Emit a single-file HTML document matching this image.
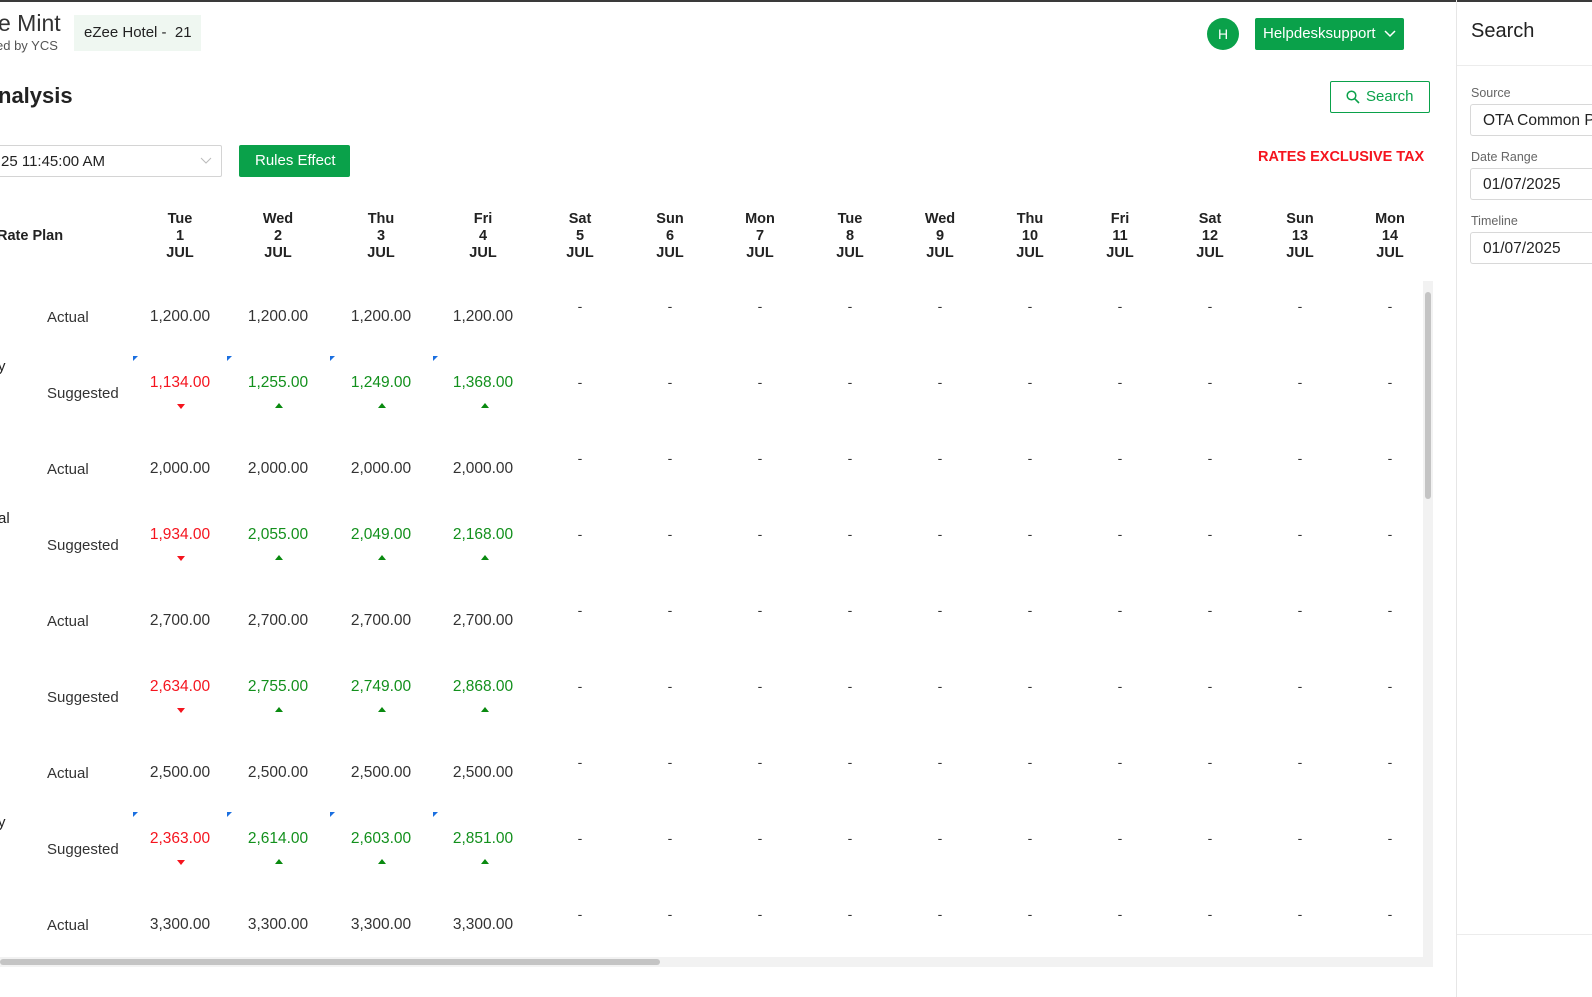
<!DOCTYPE html>
<html><head><meta charset="utf-8"><style>
*{margin:0;padding:0;box-sizing:border-box}
body{width:1592px;height:997px;overflow:hidden;background:#fff;font-family:"Liberation Sans",sans-serif;color:#222;position:relative}
.a{position:absolute;white-space:nowrap}
.c{position:absolute;width:110px;text-align:center;font-size:15.5px;line-height:18px;color:#333}
.h{position:absolute;width:80px;text-align:center;font-size:14.5px;font-weight:bold;line-height:17px;color:#222}
.r{color:#f5141e}.g{color:#12901c}
.up{position:absolute;width:0;height:0;border-left:4px solid transparent;border-right:4px solid transparent;border-bottom:5px solid #0a8a10}
.dn{position:absolute;width:0;height:0;border-left:4px solid transparent;border-right:4px solid transparent;border-top:5px solid #f5141e}
.bm{position:absolute;width:0;height:0;border-top:5px solid #1a6fe0;border-right:5px solid transparent}
.lbl{position:absolute;left:47px;font-size:15px;color:#333}
.inp{position:absolute;left:1470px;width:140px;height:32px;border:1px solid #d8d8d8;border-right:none;border-radius:3px 0 0 3px;font-size:15.5px;padding:7px 0 0 12px;color:#222}
.fl{position:absolute;left:1471px;font-size:12.5px;color:#666}
</style></head><body>
<div class="a" style="left:0;top:0;width:1592px;height:2px;background:#3a3a3a"></div>
<div class="a" style="left:-2px;top:10px;font-size:23px;color:#333">e Mint</div>
<div class="a" style="left:-4px;top:38px;font-size:13px;color:#555">ed by YCS</div>
<div class="a" style="left:74px;top:15px;width:127px;height:36px;background:#eff7f1;font-size:15px;padding:9px 0 0 10px;color:#222">eZee Hotel -&nbsp; 21</div>
<div class="a" style="left:1207px;top:18px;width:32px;height:32px;border-radius:50%;background:#0aa14a;color:#fff;font-size:14px;text-align:center;line-height:32px">H</div>
<div class="a" style="left:1255px;top:18px;width:149px;height:32px;background:#0aa14a;border-radius:2px;color:#fff;font-size:15px;padding:7px 0 0 8px">Helpdesksupport <svg width="12" height="8" style="margin-left:4px"><path d="M1 1l5 5 5-5" stroke="#fff" stroke-width="1.5" fill="none"/></svg></div>
<div class="a" style="left:-2px;top:83px;font-size:22px;font-weight:bold;color:#222">nalysis</div>
<div class="a" style="left:1330px;top:81px;width:100px;height:32px;border:1.5px solid #0aa14a;border-radius:2px;color:#0aa14a;font-size:15px;padding:6px 0 0 35px">Search</div>
<svg class="a" style="left:1346px;top:90px" width="14" height="14"><circle cx="5.5" cy="5.5" r="4.3" stroke="#0aa14a" stroke-width="1.5" fill="none"/><path d="M8.7 8.7L13 13" stroke="#0aa14a" stroke-width="1.6"/></svg>
<div class="a" style="left:-5px;top:145px;width:227px;height:32px;border:1px solid #d4d4d4;border-radius:2px;font-size:15px;padding:7px 0 0 5px;color:#222">25 11:45:00 AM</div>
<svg class="a" style="left:200px;top:157px" width="12" height="8"><path d="M1 1l5 5 5-5" stroke="#bbb" stroke-width="1" fill="none"/></svg>
<div class="a" style="left:239px;top:145px;width:111px;height:32px;background:#0aa14a;border-radius:2px;color:#fff;font-size:15px;padding:7px 0 0 16px">Rules Effect</div>
<div class="a" style="left:1258px;top:149px;font-size:14.5px;font-weight:bold;color:#f5141e">RATES EXCLUSIVE TAX</div>
<div class="a" style="left:-3px;top:228px;font-size:14.5px;font-weight:bold">Rate Plan</div>

<div class="h" style="left:140px;top:211px">Tue<br>1<br>JUL</div>
<div class="h" style="left:238px;top:211px">Wed<br>2<br>JUL</div>
<div class="h" style="left:341px;top:211px">Thu<br>3<br>JUL</div>
<div class="h" style="left:443px;top:211px">Fri<br>4<br>JUL</div>
<div class="h" style="left:540px;top:211px">Sat<br>5<br>JUL</div>
<div class="h" style="left:630px;top:211px">Sun<br>6<br>JUL</div>
<div class="h" style="left:720px;top:211px">Mon<br>7<br>JUL</div>
<div class="h" style="left:810px;top:211px">Tue<br>8<br>JUL</div>
<div class="h" style="left:900px;top:211px">Wed<br>9<br>JUL</div>
<div class="h" style="left:990px;top:211px">Thu<br>10<br>JUL</div>
<div class="h" style="left:1080px;top:211px">Fri<br>11<br>JUL</div>
<div class="h" style="left:1170px;top:211px">Sat<br>12<br>JUL</div>
<div class="h" style="left:1260px;top:211px">Sun<br>13<br>JUL</div>
<div class="h" style="left:1350px;top:211px">Mon<br>14<br>JUL</div>

<svg class="a" style="left:0;top:0" width="1420" height="960" font-family="Liberation Sans" font-size="14" fill="#333" text-anchor="middle">
<text x="580" y="311">-</text><text x="670" y="311">-</text><text x="760" y="311">-</text><text x="850" y="311">-</text><text x="940" y="311">-</text><text x="1030" y="311">-</text><text x="1120" y="311">-</text><text x="1210" y="311">-</text><text x="1300" y="311">-</text><text x="1390" y="311">-</text>
<text x="580" y="387">-</text><text x="670" y="387">-</text><text x="760" y="387">-</text><text x="850" y="387">-</text><text x="940" y="387">-</text><text x="1030" y="387">-</text><text x="1120" y="387">-</text><text x="1210" y="387">-</text><text x="1300" y="387">-</text><text x="1390" y="387">-</text>
<text x="580" y="463">-</text><text x="670" y="463">-</text><text x="760" y="463">-</text><text x="850" y="463">-</text><text x="940" y="463">-</text><text x="1030" y="463">-</text><text x="1120" y="463">-</text><text x="1210" y="463">-</text><text x="1300" y="463">-</text><text x="1390" y="463">-</text>
<text x="580" y="539">-</text><text x="670" y="539">-</text><text x="760" y="539">-</text><text x="850" y="539">-</text><text x="940" y="539">-</text><text x="1030" y="539">-</text><text x="1120" y="539">-</text><text x="1210" y="539">-</text><text x="1300" y="539">-</text><text x="1390" y="539">-</text>
<text x="580" y="615">-</text><text x="670" y="615">-</text><text x="760" y="615">-</text><text x="850" y="615">-</text><text x="940" y="615">-</text><text x="1030" y="615">-</text><text x="1120" y="615">-</text><text x="1210" y="615">-</text><text x="1300" y="615">-</text><text x="1390" y="615">-</text>
<text x="580" y="691">-</text><text x="670" y="691">-</text><text x="760" y="691">-</text><text x="850" y="691">-</text><text x="940" y="691">-</text><text x="1030" y="691">-</text><text x="1120" y="691">-</text><text x="1210" y="691">-</text><text x="1300" y="691">-</text><text x="1390" y="691">-</text>
<text x="580" y="767">-</text><text x="670" y="767">-</text><text x="760" y="767">-</text><text x="850" y="767">-</text><text x="940" y="767">-</text><text x="1030" y="767">-</text><text x="1120" y="767">-</text><text x="1210" y="767">-</text><text x="1300" y="767">-</text><text x="1390" y="767">-</text>
<text x="580" y="843">-</text><text x="670" y="843">-</text><text x="760" y="843">-</text><text x="850" y="843">-</text><text x="940" y="843">-</text><text x="1030" y="843">-</text><text x="1120" y="843">-</text><text x="1210" y="843">-</text><text x="1300" y="843">-</text><text x="1390" y="843">-</text>
<text x="580" y="919">-</text><text x="670" y="919">-</text><text x="760" y="919">-</text><text x="850" y="919">-</text><text x="940" y="919">-</text><text x="1030" y="919">-</text><text x="1120" y="919">-</text><text x="1210" y="919">-</text><text x="1300" y="919">-</text><text x="1390" y="919">-</text>
</svg>

<div class="lbl" style="top:309px">Actual</div>
<div class="a" style="left:-2px;top:358px;font-size:15px">y</div>
<div class="lbl" style="top:385px">Suggested</div>
<div class="c" style="left:125px;top:308px">1,200.00</div><div class="c" style="left:223px;top:308px">1,200.00</div><div class="c" style="left:326px;top:308px">1,200.00</div><div class="c" style="left:428px;top:308px">1,200.00</div>
<div class="c r" style="left:125px;top:374px">1,134.00</div><div class="c g" style="left:223px;top:374px">1,255.00</div><div class="c g" style="left:326px;top:374px">1,249.00</div><div class="c g" style="left:428px;top:374px">1,368.00</div>
<div class="dn" style="left:177px;top:404px"></div><div class="up" style="left:275px;top:403px"></div><div class="up" style="left:378px;top:403px"></div><div class="up" style="left:481px;top:403px"></div>
<div class="bm" style="left:133px;top:356px"></div><div class="bm" style="left:227px;top:356px"></div><div class="bm" style="left:330px;top:356px"></div><div class="bm" style="left:433px;top:356px"></div>

<div class="lbl" style="top:461px">Actual</div>
<div class="a" style="left:-2px;top:510px;font-size:15px">al</div>
<div class="lbl" style="top:537px">Suggested</div>
<div class="c" style="left:125px;top:460px">2,000.00</div><div class="c" style="left:223px;top:460px">2,000.00</div><div class="c" style="left:326px;top:460px">2,000.00</div><div class="c" style="left:428px;top:460px">2,000.00</div>
<div class="c r" style="left:125px;top:526px">1,934.00</div><div class="c g" style="left:223px;top:526px">2,055.00</div><div class="c g" style="left:326px;top:526px">2,049.00</div><div class="c g" style="left:428px;top:526px">2,168.00</div>
<div class="dn" style="left:177px;top:556px"></div><div class="up" style="left:275px;top:555px"></div><div class="up" style="left:378px;top:555px"></div><div class="up" style="left:481px;top:555px"></div>

<div class="lbl" style="top:613px">Actual</div>
<div class="lbl" style="top:689px">Suggested</div>
<div class="c" style="left:125px;top:612px">2,700.00</div><div class="c" style="left:223px;top:612px">2,700.00</div><div class="c" style="left:326px;top:612px">2,700.00</div><div class="c" style="left:428px;top:612px">2,700.00</div>
<div class="c r" style="left:125px;top:678px">2,634.00</div><div class="c g" style="left:223px;top:678px">2,755.00</div><div class="c g" style="left:326px;top:678px">2,749.00</div><div class="c g" style="left:428px;top:678px">2,868.00</div>
<div class="dn" style="left:177px;top:708px"></div><div class="up" style="left:275px;top:707px"></div><div class="up" style="left:378px;top:707px"></div><div class="up" style="left:481px;top:707px"></div>

<div class="lbl" style="top:765px">Actual</div>
<div class="a" style="left:-2px;top:814px;font-size:15px">y</div>
<div class="lbl" style="top:841px">Suggested</div>
<div class="c" style="left:125px;top:764px">2,500.00</div><div class="c" style="left:223px;top:764px">2,500.00</div><div class="c" style="left:326px;top:764px">2,500.00</div><div class="c" style="left:428px;top:764px">2,500.00</div>
<div class="c r" style="left:125px;top:830px">2,363.00</div><div class="c g" style="left:223px;top:830px">2,614.00</div><div class="c g" style="left:326px;top:830px">2,603.00</div><div class="c g" style="left:428px;top:830px">2,851.00</div>
<div class="dn" style="left:177px;top:860px"></div><div class="up" style="left:275px;top:859px"></div><div class="up" style="left:378px;top:859px"></div><div class="up" style="left:481px;top:859px"></div>
<div class="bm" style="left:133px;top:812px"></div><div class="bm" style="left:227px;top:812px"></div><div class="bm" style="left:330px;top:812px"></div><div class="bm" style="left:433px;top:812px"></div>

<div class="lbl" style="top:917px">Actual</div>
<div class="c" style="left:125px;top:916px">3,300.00</div><div class="c" style="left:223px;top:916px">3,300.00</div><div class="c" style="left:326px;top:916px">3,300.00</div><div class="c" style="left:428px;top:916px">3,300.00</div>

<div class="a" style="left:1423px;top:281px;width:10px;height:676px;background:#f2f2f2"></div>
<div class="a" style="left:1425px;top:292px;width:6px;height:207px;background:#c4c4c4;border-radius:3px"></div>
<div class="a" style="left:0;top:957px;width:1433px;height:10px;background:#f2f2f2"></div>
<div class="a" style="left:0;top:959px;width:660px;height:6px;background:#c4c4c4;border-radius:3px"></div>

<div class="a" style="left:1456px;top:0;width:1px;height:997px;background:#e6e6e6"></div>
<div class="a" style="left:1457px;top:65px;width:135px;height:1px;background:#ececec"></div>
<div class="a" style="left:1457px;top:934px;width:135px;height:1px;background:#ececec"></div>
<div class="a" style="left:1471px;top:20px;font-size:20px;color:#222">Search</div>
<div class="fl" style="top:86px">Source</div>
<div class="inp" style="top:104px">OTA Common Po</div>
<div class="fl" style="top:150px">Date Range</div>
<div class="inp" style="top:168px">01/07/2025</div>
<div class="fl" style="top:214px">Timeline</div>
<div class="inp" style="top:232px">01/07/2025</div>
</body></html>
